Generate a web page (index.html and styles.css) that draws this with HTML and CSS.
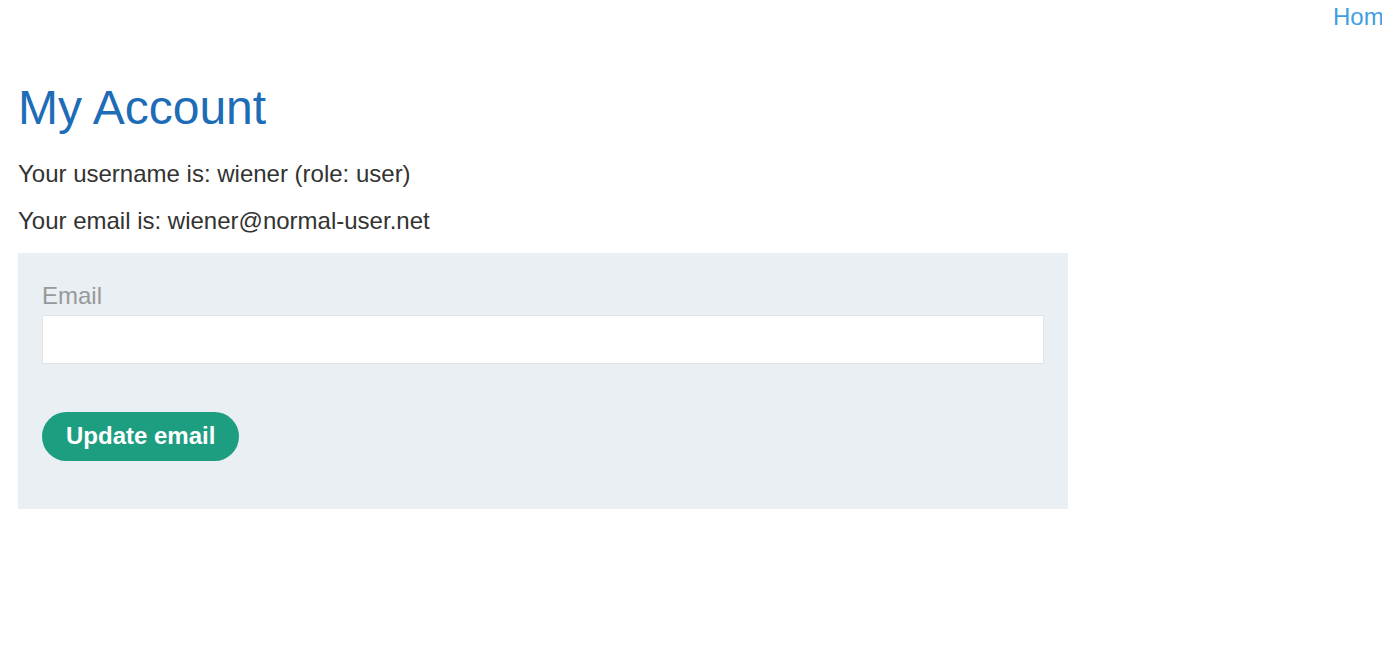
FILE: index.html
```html
<!DOCTYPE html>
<html>
<head>
<meta charset="utf-8">
<link rel="stylesheet" href="styles.css">
</head>
<body>
<div class="page">
  <header class="top-nav">
    <a class="nav-link" href="#">Home</a>
  </header>
  <main class="content">
    <h1 class="title">My Account</h1>
    <p class="info first">Your username is: wiener (role: user)</p>
    <p class="info">Your email is: wiener@normal-user.net</p>
    <form class="email-form">
      <label class="field-label">Email</label>
      <input class="field-input" type="email" name="email">
      <button class="btn-primary" type="button">Update email</button>
    </form>
  </main>
</div>
</body>
</html>
```
FILE: styles.css
```css
html, body {
  margin: 0;
  padding: 0;
  overflow: hidden;
  background: #fff;
}
.page {
  width: 1400px;
  font-family: "Liberation Sans", Arial, sans-serif;
  color: #333332;
}
.top-nav {
  display: flex;
  justify-content: flex-end;
  padding: 2px 3px 0 0;
  height: 38px;
}
.nav-link {
  font-size: 24px;
  line-height: 30px;
  color: #3f9ee2;
  text-decoration: none;
}
.content {
  padding: 0 18px;
}
.title {
  margin: 39px 0 0 0;
  font-size: 48px;
  font-weight: normal;
  color: #1d6cb7;
  line-height: 1.2;
}
.info {
  margin: 17px 0 0 0;
  font-size: 24px;
  line-height: 30px;
}
.info.first {
  margin-top: 22px;
}
.email-form {
  margin-top: 17px;
  width: 1050px;
  box-sizing: border-box;
  background: #e9eff2;
  padding: 28px 24px 48px 24px;
  display: flex;
  flex-direction: column;
  align-items: flex-start;
}
.field-label {
  font-size: 24px;
  color: #999;
  line-height: 30px;
  margin-bottom: 4px;
}
.field-input {
  width: 1002px;
  height: 49px;
  box-sizing: border-box;
  border: 1px solid #e1e4e6;
  background: #fff;
  margin: 0 0 48px 0;
  outline: none;
}
.btn-primary {
  height: 49px;
  padding: 0 24px;
  border: none;
  border-radius: 25px;
  background: #1e9e80;
  color: #fff;
  font-family: "Liberation Sans", Arial, sans-serif;
  font-size: 24px;
  font-weight: bold;
}
```
